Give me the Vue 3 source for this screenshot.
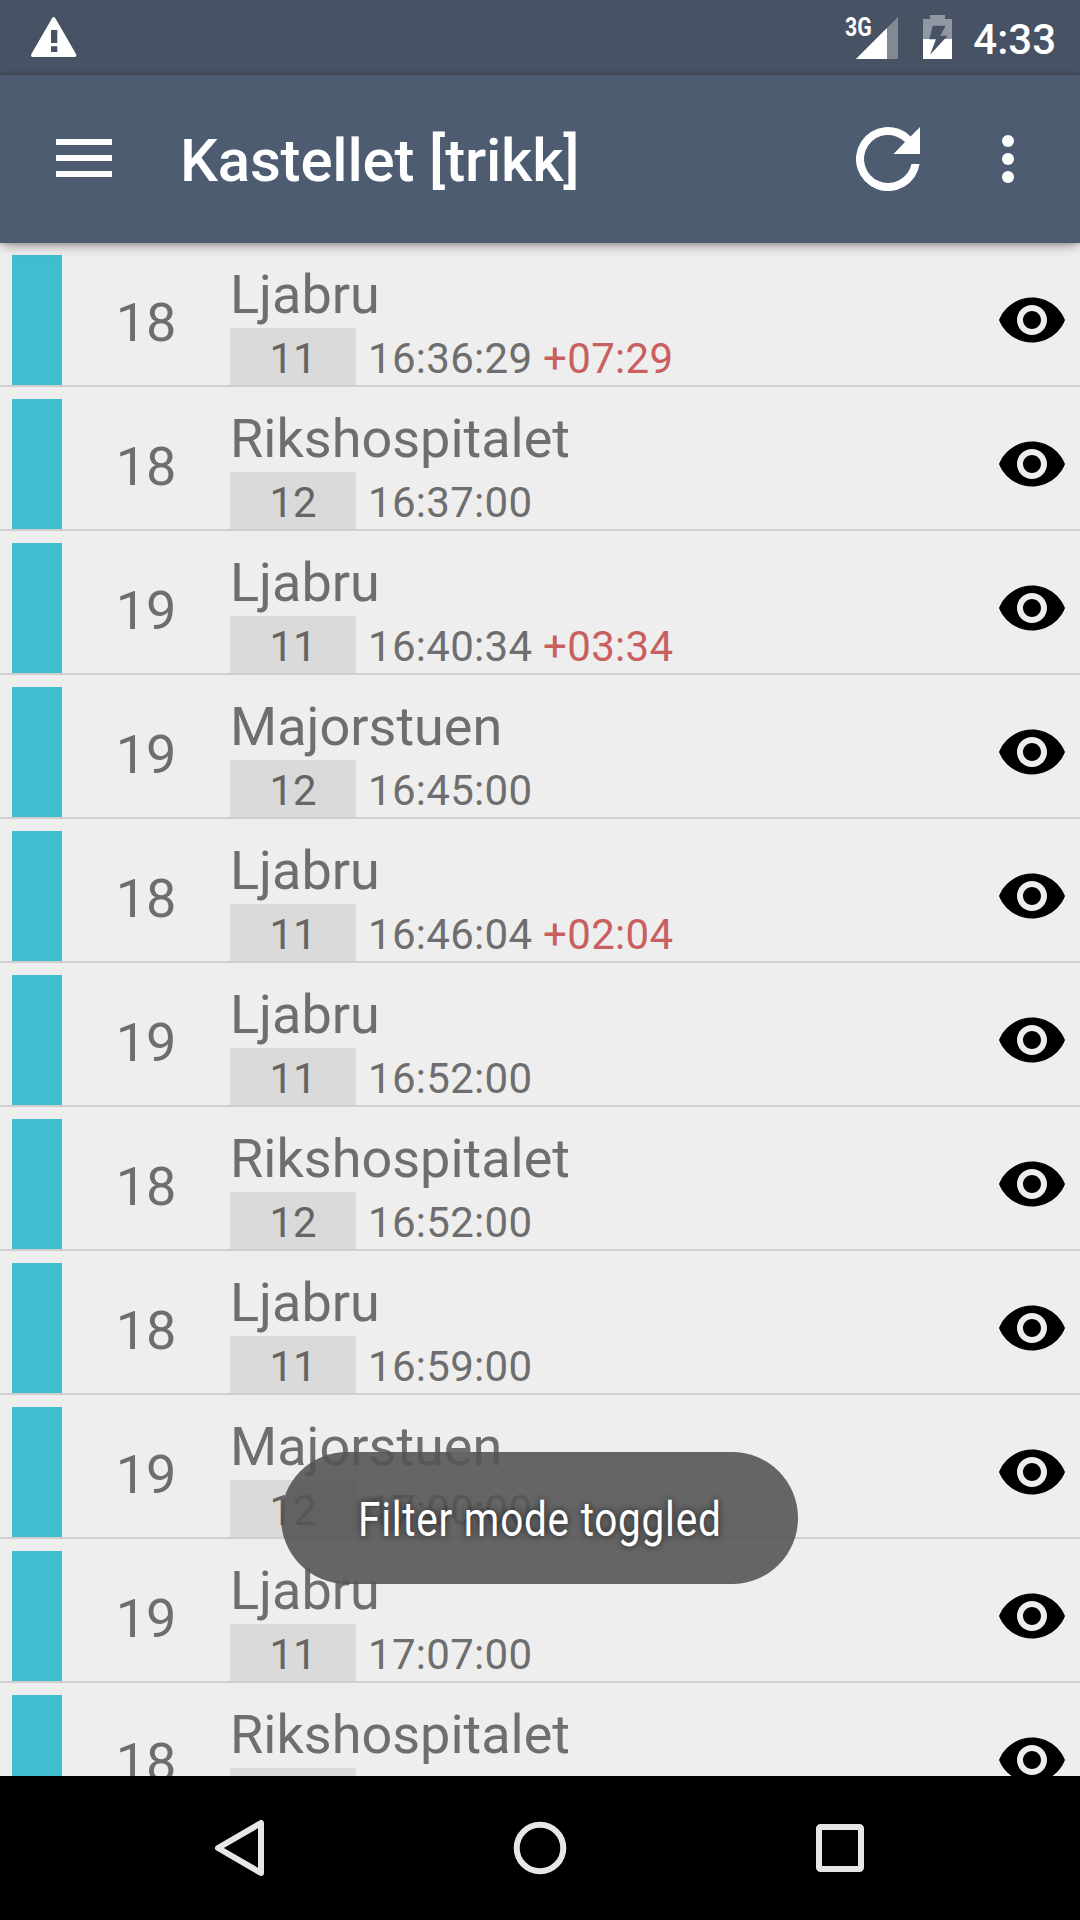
<script setup>
const departures = [
  { line: '18', name: 'Ljabru', platform: '11', time: '16:36:29', delay: '+07:29' },
  { line: '18', name: 'Rikshospitalet', platform: '12', time: '16:37:00' },
  { line: '19', name: 'Ljabru', platform: '11', time: '16:40:34', delay: '+03:34' },
  { line: '19', name: 'Majorstuen', platform: '12', time: '16:45:00' },
  { line: '18', name: 'Ljabru', platform: '11', time: '16:46:04', delay: '+02:04' },
  { line: '19', name: 'Ljabru', platform: '11', time: '16:52:00' },
  { line: '18', name: 'Rikshospitalet', platform: '12', time: '16:52:00' },
  { line: '18', name: 'Ljabru', platform: '11', time: '16:59:00' },
  { line: '19', name: 'Majorstuen', platform: '12', time: '17:00:00' },
  { line: '19', name: 'Ljabru', platform: '11', time: '17:07:00' },
  { line: '18', name: 'Rikshospitalet', platform: '12', time: '17:07:00' },
]
</script>

<template>
  <div class="screen">
    <header class="status">
      <svg class="warning" width="48" height="44" viewBox="0 0 48 44">
        <path fill="#fff" fill-rule="evenodd" d="M22.2 3 Q23.7 .9 25.2 3 L46 39 Q47 42 44.500 42 H2.700 Q.400 42 1.400 39 Z M21 15 V28 H27.300 V15 Z M21 31.300 V37 H27.300 V31.300 Z" />
      </svg>
      <div class="status-right">
        <span class="network">3G</span>
        <svg class="signal" width="42" height="42" viewBox="0 0 42 42">
          <path d="M0 42 42 0V42Z" fill="#828995" />
          <path d="M0 42 31 11V42Z" fill="#fff" />
        </svg>
        <svg class="battery" width="29" height="44" viewBox="0 0 29 44">
          <path d="M7 0H22V4H29V24H0V4H7Z" fill="#9298a3" />
          <path d="M0 24H29V44H0Z" fill="#fff" />
          <path d="M9.700 10.700H22.700L17.300 20.700H24.700L7 39.700 13 24.300H6.300Z" fill="#475264" />
        </svg>
        <span class="clock">4:33</span>
      </div>
    </header>

    <nav class="toolbar">
      <svg class="menu" width="56" height="38" viewBox="0 0 56 38">
        <path d="M0 0H56V6H0ZM0 16H56V22H0ZM0 32H56V38H0Z" fill="#fff" />
      </svg>
      <h1 class="title">Kastellet [trikk]</h1>
      <svg class="refresh" width="64" height="64" viewBox="0 0 64 64">
        <path d="M54.600 9.400A32 32 0 1 0 63.600 37H55.500A24 24 0 1 1 49 15L37.500 27H64V0Z" fill="#fff" />
      </svg>
      <svg class="more" width="12" height="48" viewBox="0 0 12 48">
        <g fill="#fff"><circle cx="6" cy="6" r="6" /><circle cx="6" cy="24" r="6" /><circle cx="6" cy="42" r="6" /></g>
      </svg>
    </nav>

    <main class="list">
      <div v-for="(d, i) in departures" :key="i" class="row">
        <div class="strip"></div>
        <div class="line">{{ d.line }}</div>
        <div class="info">
          <div class="name">{{ d.name }}</div>
          <div class="detail">
            <span class="platform">{{ d.platform }}</span>
            <span class="time">{{ d.time }} <span v-if="d.delay" class="delay">{{ d.delay }}</span></span>
          </div>
        </div>
        <svg class="eye" width="72" height="72" viewBox="0 0 24 24">
          <path d="M12 4.500C7 4.500 2.730 7.610 1 12c1.730 4.390 6 7.500 11 7.500s9.270-3.110 11-7.500c-1.730-4.390-6-7.500-11-7.500zM12 17c-2.760 0-5-2.240-5-5s2.240-5 5-5 5 2.240 5 5-2.240 5-5 5zm0-8c-1.660 0-3 1.340-3 3s1.340 3 3 3 3-1.340 3-3-1.340-3-3-3z" />
        </svg>
      </div>
    </main>

    <footer class="navbar">
      <svg width="60" height="60" viewBox="0 0 60 60"><path d="M8 30 51 5V55Z" /></svg>
      <svg width="60" height="60" viewBox="0 0 60 60"><circle cx="30" cy="30" r="23.300" /></svg>
      <svg width="60" height="60" viewBox="0 0 60 60"><rect x="9" y="9" width="42" height="42" rx="1.500" /></svg>
    </footer>

    <div class="toast"><span class="toast-text">Filter mode toggled</span></div>
  </div>
</template>

<style>
body { margin: 0; background: #000; }
</style>

<style scoped>
.screen {
  position: relative;
  display: flex;
  flex-direction: column;
  width: 1080px;
  height: 1920px;
  overflow: hidden;
  background: #eee;
  font-family: Roboto, "Liberation Sans", sans-serif;
}
.status {
  flex: none;
  display: flex;
  justify-content: space-between;
  height: 75px;
  box-sizing: border-box;
  padding: 15px 24px 0 30px;
  background: #475264;
  color: #fff;
}
.status-right { display: flex; align-items: flex-start; }
.network {
  width: 11px;
  margin-top: -2px;
  font-size: 25px;
  line-height: 30px;
  font-weight: 700;
  white-space: nowrap;
  transform: scaleX(.85);
  transform-origin: left;
}
.signal { margin-top: 2px; }
.battery { margin-left: 25px; }
.clock {
  margin-left: 21px;
  font-size: 42px;
  line-height: 49px;
  font-weight: 500;
}
.toolbar {
  flex: none;
  z-index: 1;
  display: flex;
  align-items: center;
  height: 168px;
  box-sizing: border-box;
  padding: 0 66px 0 56px;
  background: #4e5c72;
  box-shadow: 0 6px 11px -3px rgba(0, 0, 0, .3), 0 0 6px rgba(0, 0, 0, .25);
}
.menu { margin-bottom: 2px; }
.title {
  flex: 1;
  margin: 3px 0 0 68px;
  color: #fff;
  font-size: 60px;
  line-height: 70px;
  font-weight: 500;
  letter-spacing: -.18px;
}
.refresh { margin-right: 82px; }
.list { flex: 1; min-height: 0; overflow: hidden; }
.row {
  display: flex;
  height: 144px;
  box-sizing: border-box;
  padding: 12px 12px 0;
  border-bottom: 2px solid #cfcfcf;
  color: #6e6e6e;
}
.strip { width: 50px; background: #40bdce; }
.line {
  width: 168px;
  padding-top: 36px;
  font-size: 54px;
  line-height: 63px;
  text-align: center;
}
.info { flex: 1; }
.name {
  height: 65px;
  padding-top: 8px;
  font-size: 54px;
  line-height: 63px;
}
.detail { display: flex; font-size: 42px; line-height: 49px; }
.platform {
  width: 126px;
  height: 51px;
  padding-top: 6px;
  background: #dadada;
  color: #656565;
  text-align: center;
}
.time { padding: 6px 0 0 12px; letter-spacing: .3px; }
.delay { color: #c95f5f; }
.eye { align-self: center; }
.navbar {
  flex: none;
  z-index: 1;
  display: flex;
  justify-content: center;
  align-items: center;
  gap: 240px;
  height: 144px;
  background: #000;
}
.navbar svg {
  fill: none;
  stroke: #e6e6e6;
  stroke-width: 6;
  stroke-linejoin: round;
}
.toast {
  position: absolute;
  left: 281px;
  top: 1452px;
  display: flex;
  justify-content: center;
  align-items: center;
  width: 517px;
  height: 132px;
  box-sizing: border-box;
  padding-top: 4px;
  border-radius: 66px;
  background: rgba(84, 84, 84, .895);
}
.toast-text {
  color: #fff;
  font-size: 49px;
  line-height: 56px;
  letter-spacing: .9px;
  white-space: nowrap;
  text-shadow: 0 0 8px rgba(0, 0, 0, .7);
  transform: scaleX(.827);
}
</style>
